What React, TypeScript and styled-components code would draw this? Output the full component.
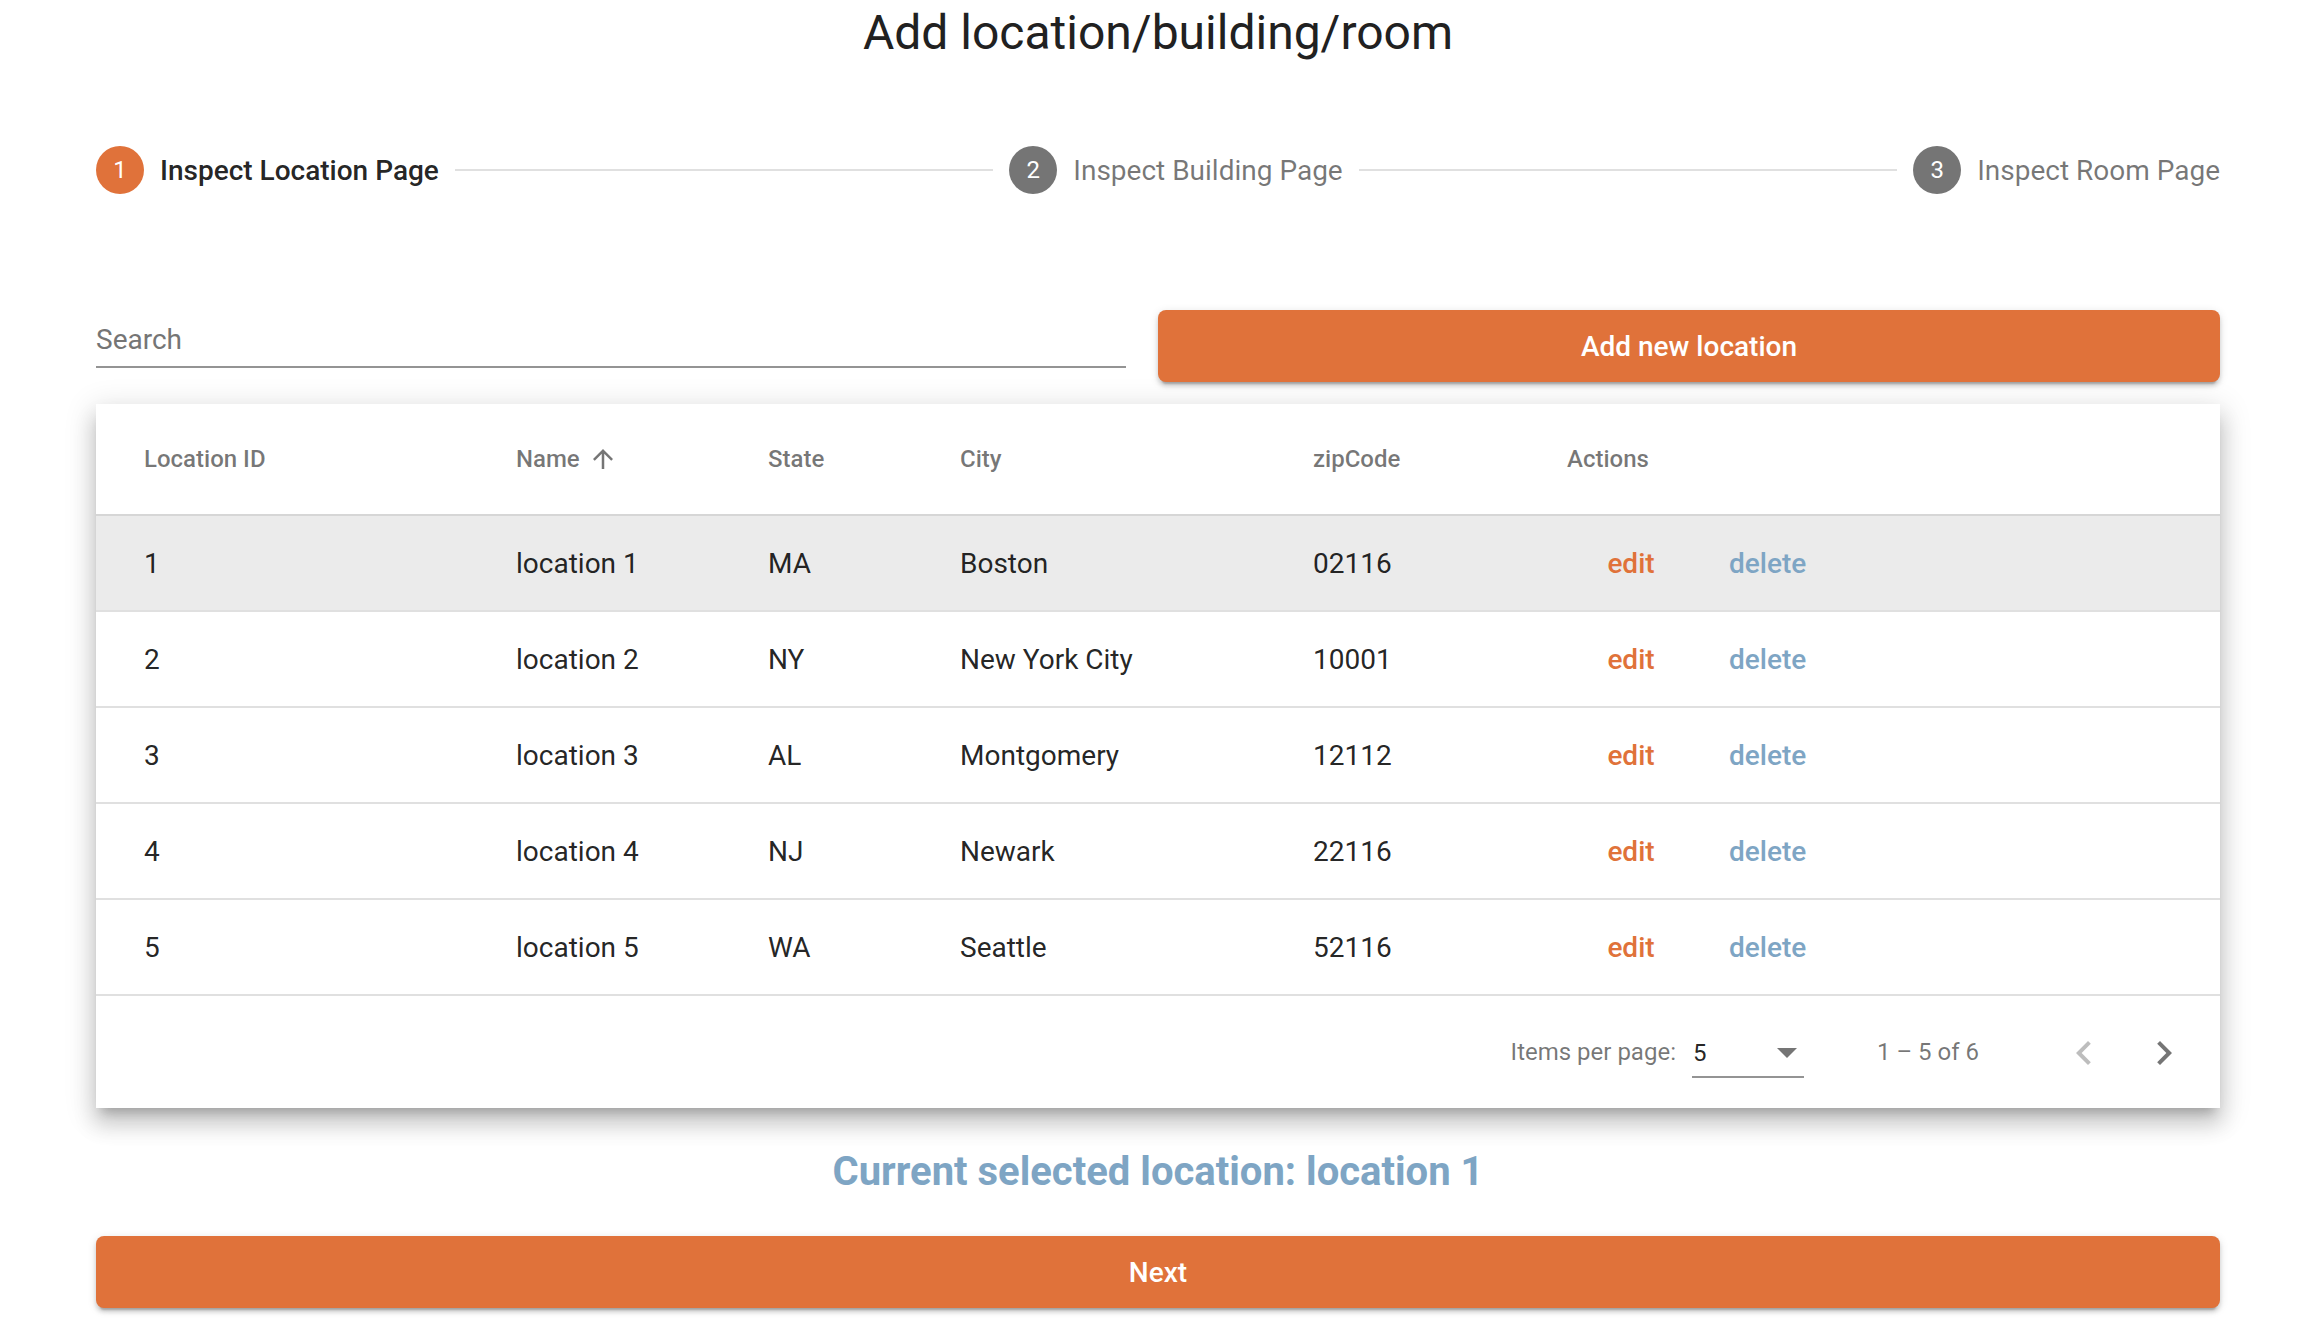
import React from "react";
import styled, { createGlobalStyle } from "styled-components";

const ORANGE = "#e0723a";
const BLUE = "#7ea5c4";

const GlobalStyle = createGlobalStyle`
  html, body {
    margin: 0;
    padding: 0;
    background: #ffffff;
    font-family: Roboto, "Liberation Sans", Arial, sans-serif;
    color: rgba(0, 0, 0, 0.87);
  }
  * {
    box-sizing: border-box;
  }
`;

const Page = styled.div`
  width: 2316px;
  height: 1334px;
  padding: 0 96px;
  overflow: hidden;
`;

const Title = styled.h1`
  margin: 0;
  padding-top: 5px;
  font-size: 48px;
  line-height: 56px;
  font-weight: 400;
  text-align: center;
  color: #212121;
`;

const Stepper = styled.div`
  display: flex;
  align-items: center;
  height: 144px;
  margin-top: 37px;
`;

const Step = styled.div`
  display: flex;
  align-items: center;
`;

const StepIcon = styled.div<{ $active?: boolean }>`
  width: 48px;
  height: 48px;
  border-radius: 50%;
  background: ${(p) => (p.$active ? ORANGE : "#757575")};
  color: #ffffff;
  font-size: 24px;
  display: flex;
  align-items: center;
  justify-content: center;
  margin-right: 16px;
`;

const StepLabel = styled.div<{ $active?: boolean }>`
  font-size: 28px;
  font-weight: ${(p) => (p.$active ? 500 : 400)};
  color: ${(p) => (p.$active ? "rgba(0,0,0,0.87)" : "rgba(0,0,0,0.54)")};
`;

const StepLine = styled.div`
  flex: 1;
  height: 2px;
  background: #e0e0e0;
  margin: 0 16px;
`;

const Toolbar = styled.div`
  display: flex;
  align-items: flex-start;
  margin-top: 68px;
`;

const SearchField = styled.label`
  flex: 1;
  margin-right: 32px;
  padding: 14px 0 10px;
  border-bottom: 2px solid #949494;
`;

const SearchInput = styled.input`
  display: block;
  width: 100%;
  height: 32px;
  border: none;
  outline: none;
  padding: 0;
  background: transparent;
  font-family: inherit;
  font-size: 28px;
  line-height: 32px;
  color: rgba(0, 0, 0, 0.87);

  &::placeholder {
    color: #757575;
  }
`;

const RaisedButton = styled.button<{ $full?: boolean }>`
  width: ${(p) => (p.$full ? "100%" : "50%")};
  height: 72px;
  border: none;
  border-radius: 8px;
  background: ${ORANGE};
  color: #ffffff;
  font-family: inherit;
  font-size: 28px;
  font-weight: 500;
  cursor: pointer;
  box-shadow: 0 6px 2px -4px rgba(0, 0, 0, 0.2), 0 4px 4px 0 rgba(0, 0, 0, 0.14),
    0 2px 10px 0 rgba(0, 0, 0, 0.12);
`;

const Card = styled.div`
  margin-top: 22px;
  background: #ffffff;
  box-shadow: 0 10px 10px -6px rgba(0, 0, 0, 0.2),
    0 16px 20px 2px rgba(0, 0, 0, 0.14), 0 6px 28px 4px rgba(0, 0, 0, 0.12);
`;

const Row = styled.div<{ $header?: boolean; $selected?: boolean }>`
  display: grid;
  grid-template-columns: 372px 252px 192px 353px 254px 1fr;
  align-items: center;
  padding: 0 48px;
  height: ${(p) => (p.$header ? 112 : 96)}px;
  border-bottom: 2px solid ${(p) => (p.$header ? "#d6d6d6" : "#e0e0e0")};
  background: ${(p) => (p.$selected ? "#ebebeb" : "transparent")};
  font-size: ${(p) => (p.$header ? 24 : 28)}px;
  font-weight: ${(p) => (p.$header ? 500 : 400)};
  color: ${(p) => (p.$header ? "rgba(0,0,0,0.54)" : "rgba(0,0,0,0.87)")};
`;

const SortHeader = styled.div`
  display: flex;
  align-items: center;
  gap: 8px;
`;

const Actions = styled.div`
  display: flex;
  gap: 2px;
`;

const TextButton = styled.button<{ $tone: "edit" | "delete" }>`
  min-width: 128px;
  height: 72px;
  padding: 0 32px;
  border: none;
  background: transparent;
  font-family: inherit;
  font-size: 28px;
  font-weight: 500;
  color: ${(p) => (p.$tone === "edit" ? ORANGE : BLUE)};
  cursor: pointer;
`;

const Paginator = styled.div`
  display: flex;
  align-items: center;
  justify-content: flex-end;
  height: 112px;
  padding-right: 16px;
  font-size: 24px;
  color: rgba(0, 0, 0, 0.54);
`;

const PageSelect = styled.div`
  width: 112px;
  margin-left: 16px;
  margin-top: 2px;
  padding: 11px 7px 9px 1px;
  border-bottom: 2px solid #949494;
  display: flex;
  align-items: center;
  justify-content: space-between;
  line-height: 28px;
  color: rgba(0, 0, 0, 0.87);
`;

const SelectArrow = styled.span`
  width: 0;
  height: 0;
  border-left: 10px solid transparent;
  border-right: 10px solid transparent;
  border-top: 10px solid #757575;
`;

const RangeLabel = styled.div`
  margin: 0 65px 0 73px;
`;

const IconButton = styled.button<{ $disabled?: boolean }>`
  width: 80px;
  height: 80px;
  border: none;
  background: transparent;
  padding: 0;
  margin-top: 2px;
  display: flex;
  align-items: center;
  justify-content: center;
  color: ${(p) => (p.$disabled ? "rgba(0,0,0,0.26)" : "rgba(0,0,0,0.54)")};
`;

const Selected = styled.h2`
  margin: 40px 0 0;
  font-size: 40px;
  line-height: 48px;
  font-weight: 700;
  text-align: center;
  color: ${BLUE};
`;

const NextWrap = styled.div`
  margin-top: 40px;
`;

const locations = [
  { id: 1, name: "location 1", state: "MA", city: "Boston", zip: "02116" },
  { id: 2, name: "location 2", state: "NY", city: "New York City", zip: "10001" },
  { id: 3, name: "location 3", state: "AL", city: "Montgomery", zip: "12112" },
  { id: 4, name: "location 4", state: "NJ", city: "Newark", zip: "22116" },
  { id: 5, name: "location 5", state: "WA", city: "Seattle", zip: "52116" },
];

const steps = ["Inspect Location Page", "Inspect Building Page", "Inspect Room Page"];

function ArrowUp() {
  return (
    <svg width="30" height="30" viewBox="0 0 24 24" fill="#757575">
      <path d="M4 12l1.41 1.41L11 7.83V20h2V7.83l5.58 5.59L20 12l-8-8-8 8z" />
    </svg>
  );
}

function Chevron({ dir }: { dir: "left" | "right" }) {
  const d =
    dir === "left"
      ? "M15.41 7.41L14 6l-6 6 6 6 1.41-1.41L10.83 12z"
      : "M8.59 16.59L13.17 12 8.59 7.41 10 6l6 6-6 6z";
  return (
    <svg width="48" height="48" viewBox="0 0 24 24" fill="currentColor">
      <path d={d} />
    </svg>
  );
}

export default function App() {
  return (
    <>
      <GlobalStyle />
      <Page>
        <Title>Add location/building/room</Title>

        <Stepper>
          {steps.map((label, i) => (
            <React.Fragment key={label}>
              {i > 0 && <StepLine />}
              <Step>
                <StepIcon $active={i === 0}>{i + 1}</StepIcon>
                <StepLabel $active={i === 0}>{label}</StepLabel>
              </Step>
            </React.Fragment>
          ))}
        </Stepper>

        <Toolbar>
          <SearchField>
            <SearchInput placeholder="Search" />
          </SearchField>
          <RaisedButton>Add new location</RaisedButton>
        </Toolbar>

        <Card>
          <Row $header>
            <div>Location ID</div>
            <SortHeader>
              Name <ArrowUp />
            </SortHeader>
            <div>State</div>
            <div>City</div>
            <div>zipCode</div>
            <div>Actions</div>
          </Row>
          {locations.map((loc) => (
            <Row key={loc.id} $selected={loc.id === 1}>
              <div>{loc.id}</div>
              <div>{loc.name}</div>
              <div>{loc.state}</div>
              <div>{loc.city}</div>
              <div>{loc.zip}</div>
              <Actions>
                <TextButton $tone="edit">edit</TextButton>
                <TextButton $tone="delete">delete</TextButton>
              </Actions>
            </Row>
          ))}
          <Paginator>
            <div>Items per page:</div>
            <PageSelect>
              <span>5</span>
              <SelectArrow />
            </PageSelect>
            <RangeLabel>1 – 5 of 6</RangeLabel>
            <IconButton $disabled>
              <Chevron dir="left" />
            </IconButton>
            <IconButton>
              <Chevron dir="right" />
            </IconButton>
          </Paginator>
        </Card>

        <Selected>Current selected location: location 1</Selected>

        <NextWrap>
          <RaisedButton $full>Next</RaisedButton>
        </NextWrap>
      </Page>
    </>
  );
}
